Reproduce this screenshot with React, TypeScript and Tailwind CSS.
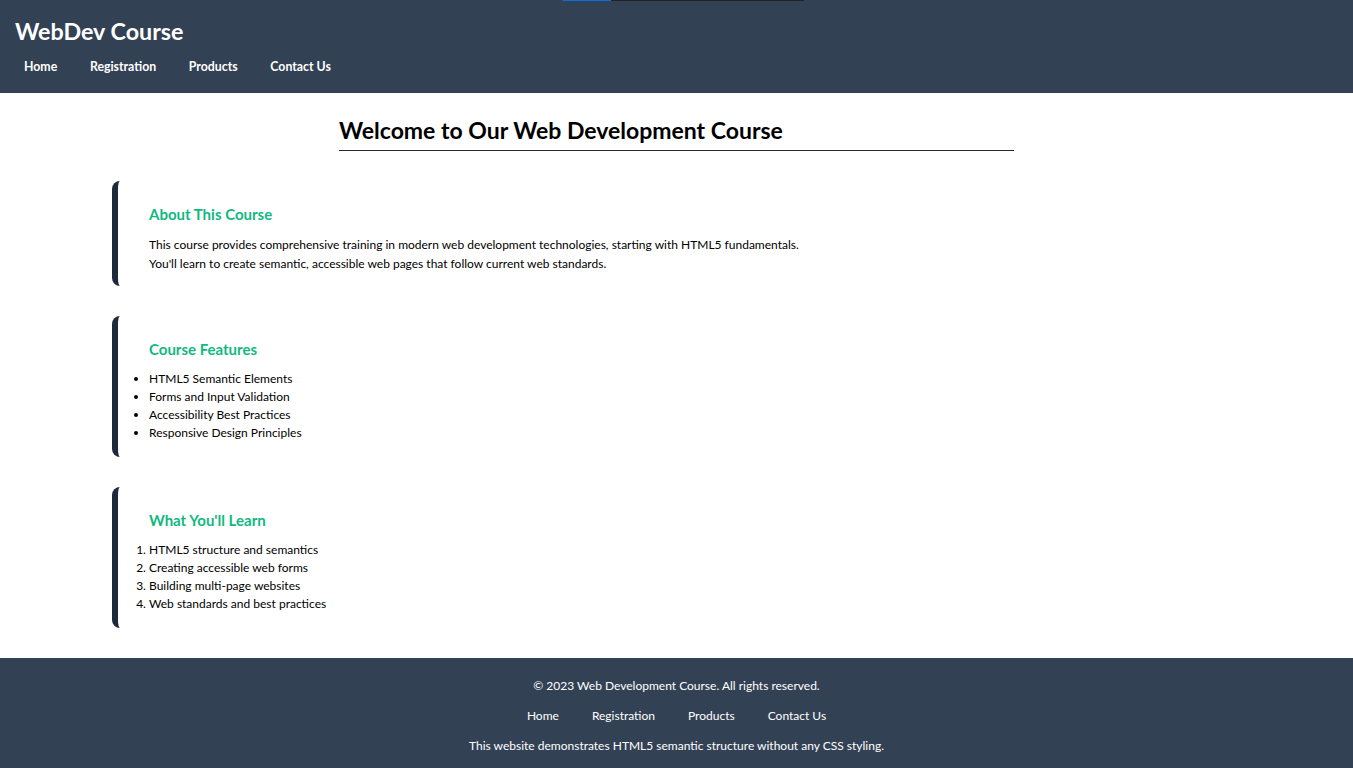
import React from 'react';

const navLinks = ['Home', 'Registration', 'Products', 'Contact Us'];

const Section: React.FC<{ title: string; children: React.ReactNode }> = ({ title, children }) => (
  <section className="border-l-[6px] border-[#1e293b] rounded-l-lg pl-[31px] pt-[22px] pb-[13.5px]">
    <h2 className="text-[15px] font-bold text-[#10b981] mb-[9px]">{title}</h2>
    {children}
  </section>
);

export default function App() {
  return (
    <div className="min-h-screen bg-white text-black" style={{ fontFamily: 'Lato, "Noto Sans", sans-serif' }}>
      <div className="absolute top-0 left-[563px] flex h-px">
        <div className="w-[48px] bg-[#0a6fd6]" />
        <div className="w-[193px] bg-[#222]" />
      </div>

      <header className="bg-[#334155] h-[93px] px-[15px] pt-[16px]">
        <h1 className="text-[23.3px] font-bold text-white leading-[30px]">WebDev Course</h1>
        <nav className="mt-[11px] flex gap-[32.7px] pl-[9px]">
          {navLinks.map((l) => (
            <a key={l} className="text-[12.3px] font-bold text-white leading-[20px]">{l}</a>
          ))}
        </nav>
      </header>

      <main className="pt-[22px] pb-[30px]">
        <h2 className="mx-auto w-[675px] border-b border-[#1e293b] text-[23px] font-bold leading-[30px] pb-[5px]">
          Welcome to Our Web Development Course
        </h2>

        <div className="ml-[112px] mt-[30px] flex flex-col gap-[30px]">
          <Section title="About This Course">
            <p className="text-[12px] leading-[19px]">
              This course provides comprehensive training in modern web development technologies, starting with HTML5 fundamentals.
              <br />
              You'll learn to create semantic, accessible web pages that follow current web standards.
            </p>
          </Section>

          <Section title="Course Features">
            <ul className="list-disc text-[12px] leading-[18px] mt-[3px] mb-[2px]">
              <li>HTML5 Semantic Elements</li>
              <li>Forms and Input Validation</li>
              <li>Accessibility Best Practices</li>
              <li>Responsive Design Principles</li>
            </ul>
          </Section>

          <Section title="What You'll Learn">
            <ol className="list-decimal text-[12px] leading-[18px] mt-[3px] mb-[2px]">
              <li>HTML5 structure and semantics</li>
              <li>Creating accessible web forms</li>
              <li>Building multi-page websites</li>
              <li>Web standards and best practices</li>
            </ol>
          </Section>
        </div>
      </main>

      <footer className="bg-[#334155] h-[110px] pt-[18px] text-white text-[12px] text-center">
        <p className="leading-[20px]">© 2023 Web Development Course. All rights reserved.</p>
        <nav className="mt-[10px] flex justify-center gap-[33px]">
          {navLinks.map((l) => (
            <a key={l} className="leading-[20px]">{l}</a>
          ))}
        </nav>
        <p className="mt-[10px] leading-[20px]">This website demonstrates HTML5 semantic structure without any CSS styling.</p>
      </footer>
    </div>
  );
}
